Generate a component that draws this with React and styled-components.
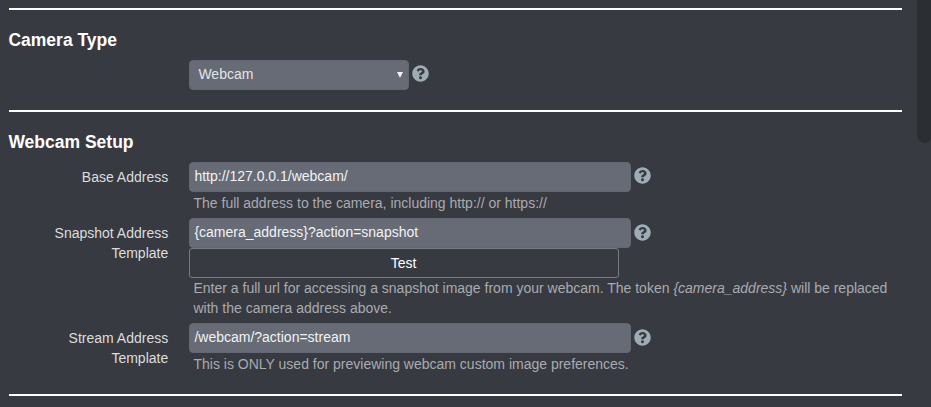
import React from "react";
import styled, { createGlobalStyle } from "styled-components";
import { FaQuestionCircle } from "react-icons/fa";

const GlobalStyle = createGlobalStyle`
  * { box-sizing: border-box; }
  body {
    margin: 0;
    background: #36393f;
    font: 14px/20px "Liberation Sans", Arial, sans-serif;
    color: #dcddde;
    overflow: hidden;
  }
`;

const Page = styled.div`
  display: flex;
  justify-content: space-between;
  height: 407px;
  overflow: hidden;
  background: #373a41;
`;

const Content = styled.main`
  width: 893px;
  margin-left: 9px;
  padding-top: 8px;
`;

const ScrollThumb = styled.div`
  width: 14px;
  height: 143px;
  background: #2b2e32;
  border-bottom-left-radius: 8px;
  border-bottom-right-radius: 6px;
`;

const Section = styled.section`
  border-top: 2px solid #fff;
  height: ${(p) => p.$height}px;
  padding-top: 20px;
`;

const Heading = styled.h3`
  margin: 0 0 10px -0.6px;
  font-size: 17.5px;
  line-height: 20px;
  color: #fff;
`;

const Row = styled.div`
  display: grid;
  grid-template-columns: 160px 1fr;
  column-gap: 20px;
  margin-bottom: 5px;
`;

const Label = styled.label`
  padding: 5px 0.8px 0 20px;
  text-align: right;
`;

const Controls = styled.div`
  display: flex;
  align-items: flex-start;
  gap: 3px;
`;

const Input = styled.input`
  width: 442px;
  height: 30px;
  padding: 0 5px 2px 4.4px;
  border: 1px solid #626772;
  border-radius: 4px;
  background: #666b76;
  color: #f2f3f4;
  font: inherit;
  outline: none;
`;

const Select = styled.button`
  display: flex;
  align-items: center;
  justify-content: space-between;
  width: 220px;
  height: 30px;
  padding: 0 5px 2px 8.4px;
  border: 1px solid #626772;
  border-radius: 4px;
  background: #666b76;
  color: #e3e4e6;
  font: inherit;
`;

const Arrow = styled.svg`
  width: 6px;
  height: 6px;
  margin-top: 2px;
  fill: #f0f1f2;
`;

const Help = styled(FaQuestionCircle)`
  width: 17px;
  height: 17px;
  margin-top: ${(p) => p.$top}px;
  color: #9eacb5;
`;

const TestButton = styled.button`
  display: block;
  width: 430px;
  height: 30px;
  padding: 0 7px 0 6px;
  border: 1px solid #777b83;
  border-radius: 3px;
  background: transparent;
  color: #fff;
  font: inherit;
`;

const Hint = styled.p`
  margin: ${(p) => p.$top}px 0 0 4.5px;
  color: #a9abb0;
`;

const HelpIcon = ({ top = 5 }) => <Help $top={top} aria-label="Help" />;

export default function App() {
  return (
    <>
      <GlobalStyle />
      <Page>
        <Content>
          <Section $height={102}>
            <Heading>Camera Type</Heading>
            <Row>
              <span />
              <Controls>
                <Select>
                  Webcam
                  <Arrow viewBox="0 0 6 6"><path d="M0 0H6L3 6Z" /></Arrow>
                </Select>
                <HelpIcon />
              </Controls>
            </Row>
          </Section>
          <Section $height={284}>
            <Heading>Webcam Setup</Heading>
            <Row>
              <Label>Base Address</Label>
              <div>
                <Controls>
                  <Input defaultValue="http://127.0.0.1/webcam/" />
                  <HelpIcon />
                </Controls>
                <Hint $top={1}>The full address to the camera, including http:// or https://</Hint>
              </div>
            </Row>
            <Row>
              <Label>Snapshot Address Template</Label>
              <div>
                <Controls>
                  <Input defaultValue="{camera_address}?action=snapshot" />
                  <HelpIcon top={6} />
                </Controls>
                <TestButton>Test</TestButton>
                <Hint $top={0}>
                  Enter a full url for accessing a snapshot image from your webcam. The token <em>{"{camera_address}"}</em> will be replaced with the camera address above.
                </Hint>
              </div>
            </Row>
            <Row>
              <Label>Stream Address Template</Label>
              <div>
                <Controls>
                  <Input defaultValue="/webcam/?action=stream" />
                  <HelpIcon top={6} />
                </Controls>
                <Hint $top={1}>This is ONLY used for previewing webcam custom image preferences.</Hint>
              </div>
            </Row>
          </Section>
          <Section $height={13} />
        </Content>
        <ScrollThumb />
      </Page>
    </>
  );
}
